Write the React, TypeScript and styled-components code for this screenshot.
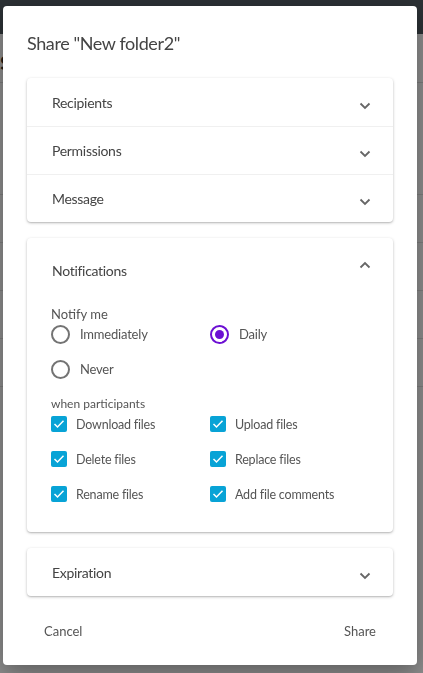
import React, { FC } from 'react';
import styled, { createGlobalStyle } from 'styled-components';

const GlobalStyle = createGlobalStyle`
  html, body {
    margin: 0;
    padding: 0;
    height: 100%;
    background: #8e8e8e;
    font-family: Lato, "Open Sans", sans-serif;
  }
  * { box-sizing: border-box; }
`;

const Backdrop = styled.div`
  height: 673px;
  overflow: hidden;
  background: #8e8e8e;
`;

const TopBar = styled.div`
  height: 34px;
  background: #2c3135;
`;

const PageHeading = styled.div`
  height: 49px;
  padding: 10px 0 0 0;
  font-size: 26px;
  font-weight: 700;
  color: #1a1a1a;
  border-bottom: 1px solid #7c7c7c;
`;

const PageRow = styled.div<{ $h: number }>`
  height: ${(p) => p.$h}px;
  border-bottom: 1px solid #7e7e7e;
`;

const Overlay = styled.div`
  position: fixed;
  inset: 0;
  display: flex;
  justify-content: center;
  align-items: flex-start;
  padding-top: 6px;
`;

const Dialog = styled.div`
  width: 414px;
  margin-left: -3px;
  background: #fff;
  border-radius: 4px;
  box-shadow: 0 8px 24px rgba(0, 0, 0, 0.35);
  padding: 21px 24px 19px;
  display: flex;
  flex-direction: column;
`;

const Title = styled.h2`
  margin: 0 0 19px;
  font-size: 18px;
  letter-spacing: -0.4px;
  line-height: 32px;
  font-weight: 400;
  color: #444;
`;

const Card = styled.div<{ $mb?: number }>`
  background: #fff;
  border-radius: 4px;
  box-shadow: 0 1px 3px rgba(0, 0, 0, 0.25), 0 1px 1px rgba(0, 0, 0, 0.08);
  margin-bottom: ${(p) => p.$mb ?? 16}px;
`;

const Row = styled.div<{ $h?: number }>`
  height: ${(p) => p.$h ?? 48}px;
  display: flex;
  align-items: center;
  justify-content: space-between;
  padding: 0 22px 0 25px;
  font-size: 14px;
  letter-spacing: -0.3px;
  color: #444;
  & + & {
    border-top: 1px solid #f0f0f0;
  }
`;

const Chevron = styled.svg<{ $up?: boolean }>`
  width: 12px;
  height: 8px;
  margin-top: ${(p) => (p.$up ? -10 : 7)}px;
  transform: ${(p) => (p.$up ? 'rotate(180deg)' : 'none')};
`;

const Body = styled.div`
  padding: 3px 24px 26px;
  color: #444;
`;

const Label = styled.div<{ $size: number; $mt?: number }>`
  font-size: ${(p) => p.$size}px;
  margin-top: ${(p) => p.$mt ?? 0}px;
  line-height: 18px;
  color: #555;
`;

const Grid = styled.div<{ $mt: number }>`
  display: grid;
  grid-template-columns: 159px 1fr;
  row-gap: 11px;
  margin-top: ${(p) => p.$mt}px;
`;

const Option = styled.label<{ $gap: number; $size: number }>`
  display: flex;
  align-items: center;
  gap: ${(p) => p.$gap}px;
  font-size: ${(p) => p.$size}px;
  letter-spacing: -0.2px;
  color: #555;
  height: 24px;
`;

const Radio = styled.span<{ $on?: boolean }>`
  width: 19px;
  height: 19px;
  border-radius: 50%;
  border: 2px solid ${(p) => (p.$on ? '#6c0fd3' : '#737373')};
  display: flex;
  align-items: center;
  justify-content: center;
  &::after {
    content: '';
    width: 9px;
    height: 9px;
    border-radius: 50%;
    background: ${(p) => (p.$on ? '#6c0fd3' : 'transparent')};
  }
`;

const Check = styled.span`
  width: 16px;
  height: 16px;
  border-radius: 2px;
  background: #08a3d6;
  display: flex;
  align-items: center;
  justify-content: center;
`;

const Footer = styled.div`
  display: flex;
  justify-content: space-between;
  padding: 20px 17px 0;
  font-size: 13px;
  color: #555;
`;

const FooterButton = styled.span`
  line-height: 30px;
`;

const ChevronIcon: FC<{ up?: boolean }> = ({ up }) => (
  <Chevron $up={up} viewBox="0 0 12 8">
    <path d="M1.5 1.5 L6 6 L10.5 1.5" fill="none" stroke="#666" strokeWidth="1.8" />
  </Chevron>
);

const CheckBox: FC = () => (
  <Check>
    <svg width="12" height="10" viewBox="0 0 12 10">
      <path d="M1.5 5 L4.5 8 L10.5 1.8" fill="none" stroke="#fff" strokeWidth="1.5" />
    </svg>
  </Check>
);

const events = [
  'Download files',
  'Upload files',
  'Delete files',
  'Replace files',
  'Rename files',
  'Add file comments',
];

export default function App() {
  return (
    <>
      <GlobalStyle />
      <Backdrop>
        <TopBar />
        <PageHeading>s</PageHeading>
        <PageRow $h={112} />
        <PageRow $h={48} />
        <PageRow $h={48} />
        <PageRow $h={48} />
        <PageRow $h={48} />
      </Backdrop>
      <Overlay>
        <Dialog>
          <Title>Share "New folder2"</Title>
          <Card>
            <Row>
              Recipients
              <ChevronIcon />
            </Row>
            <Row>
              Permissions
              <ChevronIcon />
            </Row>
            <Row>
              Message
              <ChevronIcon />
            </Row>
          </Card>
          <Card>
            <Row $h={64}>
              Notifications
              <ChevronIcon up />
            </Row>
            <Body>
              <Label $size={13}>Notify me</Label>
              <Grid $mt={-1}>
                <Option $gap={10} $size={13}>
                  <Radio />
                  Immediately
                </Option>
                <Option $gap={10} $size={13}>
                  <Radio $on />
                  Daily
                </Option>
                <Option $gap={10} $size={13}>
                  <Radio />
                  Never
                </Option>
              </Grid>
              <Label $size={12} $mt={14}>
                when participants
              </Label>
              <Grid $mt={-1}>
                {events.map((e) => (
                  <Option key={e} $gap={9} $size={12.5}>
                    <CheckBox />
                    {e}
                  </Option>
                ))}
              </Grid>
            </Body>
          </Card>
          <Card $mb={0}>
            <Row>
              Expiration
              <ChevronIcon />
            </Row>
          </Card>
          <Footer>
            <FooterButton>Cancel</FooterButton>
            <FooterButton>Share</FooterButton>
          </Footer>
        </Dialog>
      </Overlay>
    </>
  );
}
